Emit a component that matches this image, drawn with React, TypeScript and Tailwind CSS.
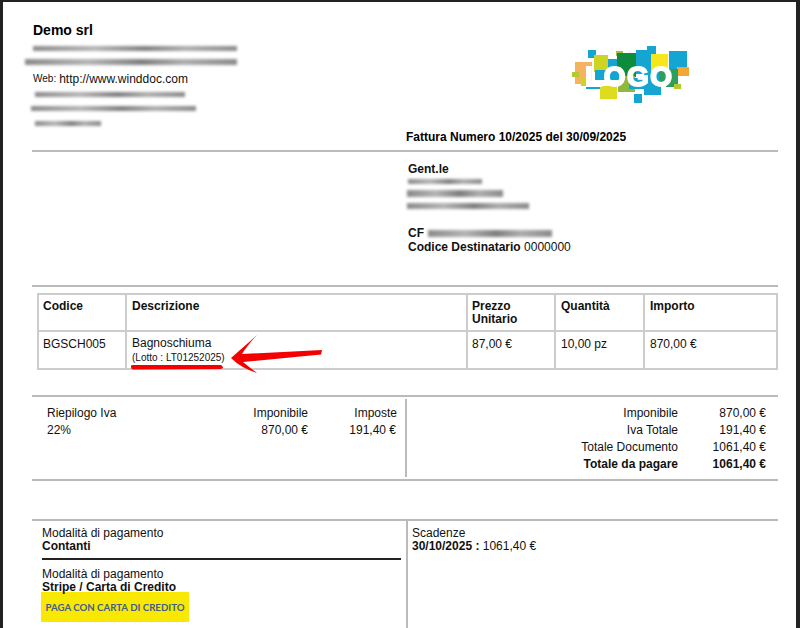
// Invoice preview (PDF-like page on a dark viewer background)

const logoBlocks = [
  { x: 576, y: 62, w: 17, h: 22, c: "#f5b25f" },
  { x: 589, y: 50, w: 8, h: 8, c: "#14a5d3" },
  { x: 595, y: 55, w: 14, h: 17, c: "#cfd321" },
  { x: 609, y: 59, w: 9, h: 14, c: "#14a5d3" },
  { x: 617, y: 51, w: 7, h: 5, c: "#a9bf3a" },
  { x: 618, y: 53, w: 19, h: 24, c: "#0f8b3e" },
  { x: 637, y: 50, w: 20, h: 24, c: "#14a5d3" },
  { x: 648, y: 46, w: 9, h: 9, c: "#14a5d3" },
  { x: 670, y: 51, w: 18, h: 18, c: "#14a5d3" },
  { x: 652, y: 54, w: 17, h: 18, c: "#f6e61a" },
  { x: 678, y: 67, w: 12, h: 9, c: "#f5a733" },
  { x: 667, y: 69, w: 12, h: 18, c: "#2ca05a" },
  { x: 573, y: 72, w: 7, h: 5, c: "#b5c92f" },
  { x: 582, y: 78, w: 5, h: 8, c: "#cfd321" },
  { x: 587, y: 84, w: 16, h: 5, c: "#14a5d3" },
  { x: 601, y: 86, w: 17, h: 13, c: "#dfdb1f" },
  { x: 619, y: 76, w: 17, h: 16, c: "#8fb83c" },
  { x: 630, y: 78, w: 15, h: 11, c: "#14a5d3" },
  { x: 645, y: 72, w: 17, h: 23, c: "#14a5d3" },
  { x: 635, y: 94, w: 8, h: 9, c: "#14a5d3" },
  { x: 675, y: 84, w: 7, h: 5, c: "#b5c92f" },
  { x: 596, y: 70, w: 24, h: 10, c: "#14a5d3" },
  { x: 660, y: 70, w: 8, h: 14, c: "#2ca05a" },
];

function Logo() {
  return (
    <svg viewBox="570 44 124 62" className="w-[124px] h-[62px] blur-[0.3px]">
      {logoBlocks.map((b, i) => (
        <rect key={i} x={b.x} y={b.y} width={b.w} height={b.h} fill={b.c} />
      ))}
      <text
        x="629.5"
        y="85.5"
        textAnchor="middle"
        fill="#fff"
        stroke="#fff"
        strokeWidth="1.8"
        fontFamily="'Liberation Sans', sans-serif"
        fontWeight="700"
        fontSize="28"
        textLength="87"
      >
        LOGO
      </text>
    </svg>
  );
}

function Smudge({ className }: { className: string }) {
  return (
    <div
      className={`bg-[linear-gradient(90deg,#8a8a8a,#b4b4b4_30%,#7e7e7e_55%,#adadad_75%,#8a8a8a)] blur-[1.5px] ${className}`}
    />
  );
}

export default function App() {
  return (
    <div className="w-[800px] h-[628px] overflow-hidden bg-[#222222] pt-[2px] pl-[3px] pr-[4px] font-['Liberation_Sans',Arial,sans-serif] text-[12px] leading-[17px] text-[#111]">
      <div className="relative h-full bg-white pl-[29px] pr-[18px]">
        {/* ── Header ── */}
        <div className="flex h-[150px] border-b-2 border-[#bbbbbb]">
          <div className="w-[374px] pt-[20px] pl-[1px]">
            <div className="text-[14px] leading-[17px] font-bold text-black">Demo srl</div>
            <div className="flex h-[14px] items-center mt-[2px]">
              <Smudge className="h-[5px] w-[204px]" />
            </div>
            <div className="flex h-[14px] items-center">
              <Smudge className="h-[6px] w-[212px] -ml-[8px]" />
            </div>
            <div className="flex h-[16px] items-center gap-[3px] mt-[2px]">
              <span className="text-[10px] -mt-[2px]">Web:</span>
              <span>http://www.winddoc.com</span>
            </div>
            <div className="flex h-[14px] items-center">
              <Smudge className="h-[5px] w-[150px] ml-[2px]" />
            </div>
            <div className="flex h-[15px] items-center">
              <Smudge className="h-[5px] w-[165px] -ml-[2px]" />
            </div>
            <div className="flex h-[14px] items-center">
              <Smudge className="h-[5px] w-[66px] ml-[2px]" />
            </div>
          </div>
          <div className="flex-1 relative">
            <div className="flex justify-end pr-[85px] pt-[42px]">
              <Logo />
            </div>
            <div className="mt-[23px] font-bold text-black">Fattura Numero 10/2025 del 30/09/2025</div>
          </div>
        </div>

        {/* ── Customer ── */}
        <div className="h-[135px] border-b-2 border-[#bbbbbb] pl-[376px] pt-[10px]">
          <div className="font-bold leading-[15px]">Gent.le</div>
          <div className="flex h-[12px] items-center -mt-[2px]">
            <Smudge className="h-[5px] w-[74px]" />
          </div>
          <div className="flex h-[13px] items-center">
            <Smudge className="h-[7px] w-[96px] -ml-[1px]" />
          </div>
          <div className="flex h-[12px] items-center">
            <Smudge className="h-[6px] w-[122px] -ml-[1px]" />
          </div>
          <div className="flex h-[14px] items-center gap-[4px] mt-[14px] font-bold">
            CF
            <Smudge className="h-[7px] w-[124px]" />
          </div>
          <div className="leading-[14px]">
            <b>Codice Destinatario</b> 0000000
          </div>
        </div>

        {/* ── Line items ── */}
        <div className="relative ml-[5px] mt-[6px] w-[741px] border-2 border-[#cccccc]">
          <div className="grid grid-cols-[88px_341px_88px_89px_1fr] h-[37px] border-b-2 border-[#cccccc] font-bold">
            <div className="border-r-2 border-[#cccccc] pl-[4px] pt-[3px]">Codice</div>
            <div className="border-r-2 border-[#cccccc] pl-[5px] pt-[3px]">Descrizione</div>
            <div className="border-r-2 border-[#cccccc] pl-[4px] pt-[5px] leading-[13px]">
              Prezzo
              <br />
              Unitario
            </div>
            <div className="border-r-2 border-[#cccccc] pl-[5px] pt-[3px]">Quantità</div>
            <div className="pl-[5px] pt-[3px]">Importo</div>
          </div>
          <div className="grid grid-cols-[88px_341px_88px_89px_1fr] h-[36px]">
            <div className="border-r-2 border-[#cccccc] pl-[4px] pt-[4px]">BGSCH005</div>
            <div className="border-r-2 border-[#cccccc] pl-[5px] pt-[4px]">
              <div className="leading-[15px]">Bagnoschiuma</div>
              <div className="text-[10px] leading-[13px]">(Lotto : LT01252025)</div>
            </div>
            <div className="border-r-2 border-[#cccccc] pl-[4px] pt-[4px]">87,00 €</div>
            <div className="border-r-2 border-[#cccccc] pl-[5px] pt-[4px]">10,00 pz</div>
            <div className="pl-[5px] pt-[4px]">870,00 €</div>
          </div>
          {/* red annotation drawn over the row */}
          <svg viewBox="0 0 240 50" className="absolute left-[90px] top-[38px] w-[240px] h-[50px]" fill="#f40000">
            <path d="M2 33 Q2 32 4 32 L92 32 Q94 33 94 35 Q93 36 91 36 L4 36.5 Q1.5 35.5 2 33Z" />
            <path d="M102 25 L128 2 Q118 13 113 21 L193 17 L192 21.5 L114 29 Q120 34 128 40 Q112 35 102 25Z" />
          </svg>
        </div>

        {/* ── VAT summary ── */}
        <div className="flex mt-[25px] h-[86px] border-y-2 border-[#bbbbbb] py-[2px]">
          <div className="w-[375px] border-r-2 border-[#bbbbbb] pt-[6px] pl-[15px]">
            <div className="grid grid-cols-[1fr_70px_89px] pr-[8px]">
              <div>Riepilogo Iva</div>
              <div className="text-right">Imponibile</div>
              <div className="text-right">Imposte</div>
              <div>22%</div>
              <div className="text-right">870,00 €</div>
              <div className="text-right pr-[1px]">191,40 €</div>
            </div>
          </div>
          <div className="flex-1 pt-[6px] pl-[99px]">
            <div className="grid grid-cols-[172px_88px] justify-start">
              <div className="text-right">Imponibile</div>
              <div className="text-right">870,00 €</div>
              <div className="text-right">Iva Totale</div>
              <div className="text-right">191,40 €</div>
              <div className="text-right">Totale Documento</div>
              <div className="text-right">1061,40 €</div>
              <div className="text-right font-bold">Totale da pagare</div>
              <div className="text-right font-bold">1061,40 €</div>
            </div>
          </div>
        </div>

        {/* ── Payment ── */}
        <div className="flex mt-[38px] h-[120px] border-t-2 border-[#bbbbbb]">
          <div className="w-[376px] border-r-2 border-[#bbbbbb] pl-[10px] pr-[5px] pt-[6px] leading-[13px]">
            <div>Modalità di pagamento</div>
            <div className="font-bold">Contanti</div>
            <div className="h-[2px] bg-[#222222] mt-[5px] mb-[8px]" />
            <div>Modalità di pagamento</div>
            <div className="font-bold">Stripe / Carta di Credito</div>
            <div className="-mt-[2px] -ml-[1px] flex h-[30px] w-[148px] items-center justify-center whitespace-nowrap rounded-[1px] bg-[#f9e900] font-['Lato',sans-serif] text-[9.7px] font-bold text-[#3f5c94]">
              PAGA CON CARTA DI CREDITO
            </div>
          </div>
          <div className="flex-1 pl-[4px] pt-[6px] leading-[13px]">
            <div>Scadenze</div>
            <div>
              <b>30/10/2025 :</b> 1061,40 €
            </div>
          </div>
        </div>
      </div>
    </div>
  );
}
